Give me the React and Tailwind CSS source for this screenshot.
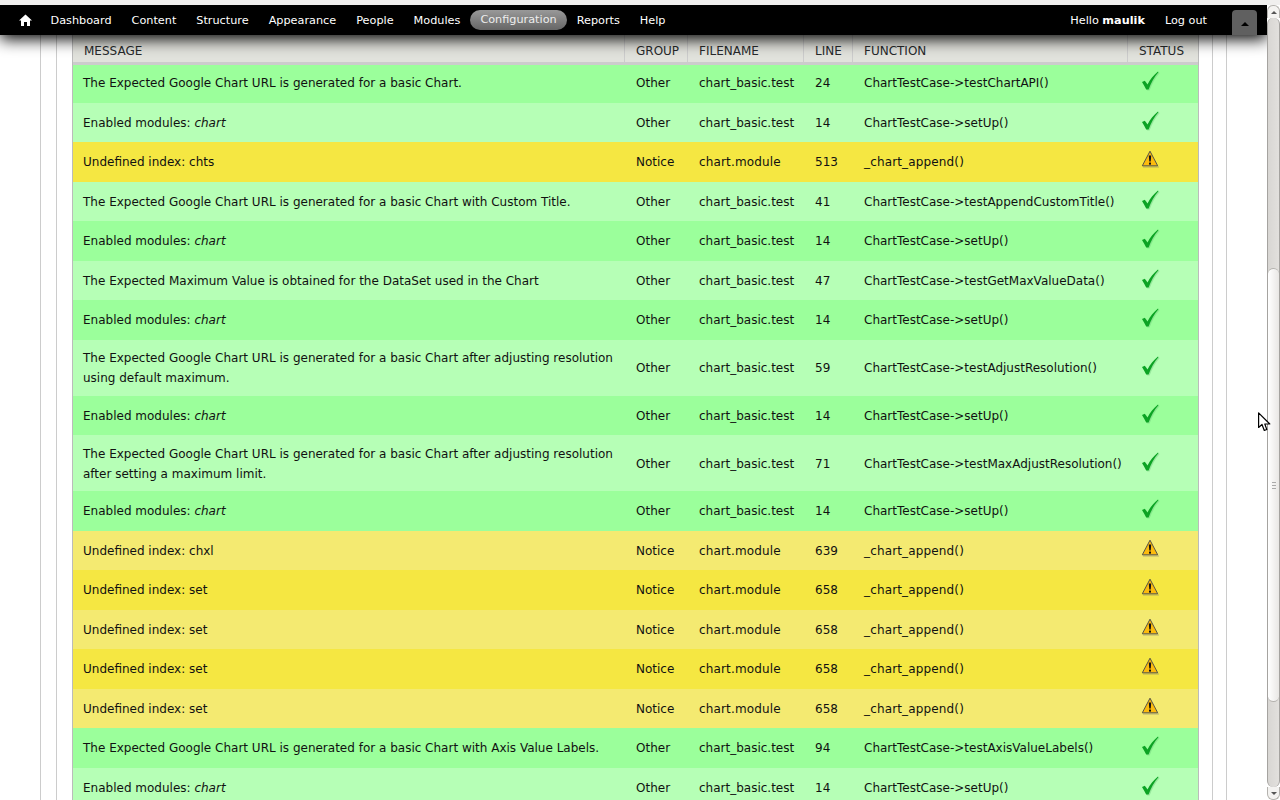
import React from "react";

const PASS = "pass";
const WARN = "warn";
const exp = "The Expected Google Chart URL is generated for a basic Chart";
const rows = [
  { m: exp + ".", g: "Other", f: "chart_basic.test", l: 24, fn: "ChartTestCase->testChartAPI()", s: PASS, c: "bg-[#9bff9b] [&>td]:pb-[2px]", h: "h-[38px]" },
  { m: "em", g: "Other", f: "chart_basic.test", l: 14, fn: "ChartTestCase->setUp()", s: PASS, c: "bg-[#b6ffb6]", h: "h-[39px]" },
  { m: "Undefined index: chts", g: "Notice", f: "chart.module", l: 513, fn: "_chart_append()", s: WARN, c: "bg-[#f5e742]", h: "h-[40px]" },
  { m: exp + " with Custom Title.", g: "Other", f: "chart_basic.test", l: 41, fn: "ChartTestCase->testAppendCustomTitle()", s: PASS, c: "bg-[#b6ffb6]", h: "h-[39px]" },
  { m: "em", g: "Other", f: "chart_basic.test", l: 14, fn: "ChartTestCase->setUp()", s: PASS, c: "bg-[#9bff9b]", h: "h-[40px]" },
  { m: "The Expected Maximum Value is obtained for the DataSet used in the Chart", g: "Other", f: "chart_basic.test", l: 47, fn: "ChartTestCase->testGetMaxValueData()", s: PASS, c: "bg-[#b6ffb6]", h: "h-[39px]" },
  { m: "em", g: "Other", f: "chart_basic.test", l: 14, fn: "ChartTestCase->setUp()", s: PASS, c: "bg-[#9bff9b]", h: "h-[40px]" },
  { m: exp + " after adjusting resolution using default maximum.", g: "Other", f: "chart_basic.test", l: 59, fn: "ChartTestCase->testAdjustResolution()", s: PASS, c: "bg-[#b6ffb6]", h: "h-[56px]" },
  { m: "em", g: "Other", f: "chart_basic.test", l: 14, fn: "ChartTestCase->setUp()", s: PASS, c: "bg-[#9bff9b]", h: "h-[39px]" },
  { m: exp + " after adjusting resolution after setting a maximum limit.", g: "Other", f: "chart_basic.test", l: 71, fn: "ChartTestCase->testMaxAdjustResolution()", s: PASS, c: "bg-[#b6ffb6] [&>td]:pt-[1px]", h: "h-[56px]" },
  { m: "em", g: "Other", f: "chart_basic.test", l: 14, fn: "ChartTestCase->setUp()", s: PASS, c: "bg-[#9bff9b]", h: "h-[40px]" },
  { m: "Undefined index: chxl", g: "Notice", f: "chart.module", l: 639, fn: "_chart_append()", s: WARN, c: "bg-[#f4ea71]", h: "h-[39px]" },
  { m: "Undefined index: set", g: "Notice", f: "chart.module", l: 658, fn: "_chart_append()", s: WARN, c: "bg-[#f5e742]", h: "h-[40px]" },
  { m: "Undefined index: set", g: "Notice", f: "chart.module", l: 658, fn: "_chart_append()", s: WARN, c: "bg-[#f4ea71]", h: "h-[39px]" },
  { m: "Undefined index: set", g: "Notice", f: "chart.module", l: 658, fn: "_chart_append()", s: WARN, c: "bg-[#f5e742]", h: "h-[40px]" },
  { m: "Undefined index: set", g: "Notice", f: "chart.module", l: 658, fn: "_chart_append()", s: WARN, c: "bg-[#f4ea71]", h: "h-[39px]" },
  { m: exp + " with Axis Value Labels.", g: "Other", f: "chart_basic.test", l: 94, fn: "ChartTestCase->testAxisValueLabels()", s: PASS, c: "bg-[#9bff9b]", h: "h-[40px]" },
  { m: "em", g: "Other", f: "chart_basic.test", l: 14, fn: "ChartTestCase->setUp()", s: PASS, c: "bg-[#b6ffb6]", h: "h-[39px]" },
];

const nav = ["Dashboard", "Content", "Structure", "Appearance", "People", "Modules", "Configuration", "Reports", "Help"];

function Check() {
  return (
    <svg width="19" height="20" viewBox="0 0 19 20" className="block ml-[2px] mb-[4px]">
      <path d="M2 12 L4.8 10.8 L7.5 14.5 C10 9 14 5 18 1.5 L18.5 2.3 C14 7 11 13 8.6 19.5 L6.2 19.5 C5 17 3.5 14.5 2 12 Z" fill="#6fc97a" opacity="0.45" />
      <path d="M1 11 L3.8 9.8 L6.5 13.5 C9 8 13 4 17 0.5 L17.5 1.3 C13 6 10 12 7.6 18.5 L5.2 18.5 C4 16 2.5 13.5 1 11 Z" fill="#0ca324" />
    </svg>
  );
}

function Warn() {
  return (
    <svg width="19" height="20" viewBox="0 0 19 20" className="block ml-[2px] mb-[4px]">
      <path d="M2 17 H18" stroke="#8d8a70" strokeWidth="1" opacity="0.6" />
      <path d="M9 1.2 L16.7 15.8 L1.3 15.8 Z" fill="#fdbb0c" stroke="#55534a" strokeWidth="1" strokeLinejoin="round" />
      <path d="M7.8 5.5 H10.2 L9.7 11.5 H8.3 Z" fill="#111" />
      <rect x="8" y="12.6" width="2" height="2" fill="#111" />
    </svg>
  );
}

function Th({ children, className = "" }) {
  return (
    <th className={"h-[30px] pt-[5px] pl-[11px] pr-[4px] text-left font-normal text-[12px] text-[#27292b] border-b-[3px] border-b-[#cccccc] border-r border-r-[#cccccc] bg-[#e1e2dc] " + className}>
      {children}
    </th>
  );
}

const Td = ({ children, className = "" }) => <td className={"pl-[11px] pr-0 align-middle " + className}>{children}</td>;

function ScrollArrow({ up }) {
  return (
    <div className={"h-[13px] shrink-0 flex items-center justify-center bg-[#f4f3f1] border-x border-[#b4b2ae] " + (up ? "rounded-t-[6px] border-t" : "rounded-b-[6px] border-b")}>
      <div className={"w-0 h-0 border-x-[3px] border-x-transparent " + (up ? "border-b-[3px] border-b-[#555]" : "border-t-[3px] border-t-[#555]")} />
    </div>
  );
}

export default function App() {
  return (
    <div className="h-screen overflow-hidden flex flex-col bg-white text-black font-['DejaVu_Sans',sans-serif]">
      <div className="h-[5px] shrink-0 bg-[#f0efee] relative z-20" />
      <div className="flex-1 min-h-0 flex">
        <div className="flex-1 min-w-0 flex flex-col relative">
          <header className="relative z-10 h-[30px] shrink-0 bg-black flex items-center pl-[19px] pr-[10px] text-[11.25px] text-white shadow-[0_4px_16px_#000]">
            <svg width="13" height="12" viewBox="0 0 13 12" className="mr-[8.5px] shrink-0">
              <path d="M6.5 0.5 L13 6.5 H11 V12 H8 V8 H5 V12 H2 V6.5 H0 Z" fill="#fff" />
            </svg>
            <nav className="flex items-center">
              {nav.map((n) =>
                n === "Configuration" ? (
                  <a key={n} className="h-[20px] pt-[1px] px-[10px] rounded-[10px] bg-gradient-to-b from-[#999] to-[#666] flex items-center text-[#ededed]">{n}</a>
                ) : (
                  <a key={n} className="px-[10px] pt-[2px]">{n}</a>
                )
              )}
            </nav>
            <div className="ml-auto flex items-center self-stretch">
              <span className="px-[10px] pt-[2px]">Hello <b>maulik</b></span>
              <span className="px-[10px] pt-[2px]">Log out</span>
              <div className="ml-[15px] w-[25px] h-[25px] self-end rounded-t-[4px] bg-[#606060] flex items-center justify-center">
                <div className="w-0 h-0 border-x-[4px] border-x-transparent border-b-[4px] border-b-black mt-[3px]" />
              </div>
            </div>
          </header>
          <main className="flex-1 min-h-0 overflow-hidden px-[40px]">
            <div className="border-x border-[#cccccc] h-full px-[15px] pr-[13px]">
              <div className="border-x border-[#cccccc] h-full pl-[15px] pr-[13px]">
                <div className="w-[1127px] border-x border-[#bbbbbb]">
                  <table className="w-[1125px] table-fixed border-separate border-spacing-0 text-[12px] leading-[20px] text-[#111]">
                    <colgroup>
                      <col className="w-[552px]" />
                      <col className="w-[63px]" />
                      <col className="w-[116px]" />
                      <col className="w-[49px]" />
                      <col className="w-[275px]" />
                      <col className="w-[70px]" />
                    </colgroup>
                    <thead>
                      <tr>
                        <Th>MESSAGE</Th>
                        <Th>GROUP</Th>
                        <Th>FILENAME</Th>
                        <Th>LINE</Th>
                        <Th>FUNCTION</Th>
                        <Th className="border-r-0">STATUS</Th>
                      </tr>
                    </thead>
                    <tbody>
                      {rows.map((r, i) => (
                        <tr key={i} className={r.c + " " + r.h}>
                          <td className="pl-[10px] pr-[11px] align-middle">
                            {r.m === "em" ? <>Enabled modules: <em>chart</em></> : r.m}
                          </td>
                          <Td>{r.g}</Td>
                          <Td className={r.s === WARN ? "tracking-[0.15px]" : ""}>{r.f}</Td>
                          <Td>{r.l}</Td>
                          <Td className={"whitespace-nowrap " + (r.s === WARN ? "tracking-[0.15px]" : "")}>{r.fn}</Td>
                          <Td>{r.s === PASS ? <Check /> : <Warn />}</Td>
                        </tr>
                      ))}
                    </tbody>
                  </table>
                </div>
              </div>
            </div>
          </main>
        </div>
        <aside className="relative z-20 w-[13px] shrink-0 bg-white flex flex-col">
          <ScrollArrow up />
          <div className="flex-1 flex flex-col pt-[250px] pb-[85px] bg-gradient-to-r from-[#d8d6d3] to-[#e2e0dd] border-x border-[#a5a3a0] rounded-[6px]">
            <div className="flex-1 rounded-[6px] bg-gradient-to-r from-[#ffffff] to-[#e9e7e5] flex items-center justify-center border-y border-[#b4b2ae]">
              <div className="w-[4px] h-[7px] border-y border-[#aaa] flex items-center"><div className="w-full h-px bg-[#aaa]" /></div>
            </div>
          </div>
          <ScrollArrow />
        </aside>
      </div>
      <svg width="13" height="20" viewBox="0 0 13 20" className="absolute left-[1258px] top-[412px] z-30">
        <path d="M0.6 0.8 V15.5 L4 12.5 L6.3 18.5 L8.8 17.5 L6.8 12 L11.8 12 Z" fill="#fff" stroke="#000" strokeWidth="1.2" strokeLinejoin="round" />
      </svg>
    </div>
  );
}
